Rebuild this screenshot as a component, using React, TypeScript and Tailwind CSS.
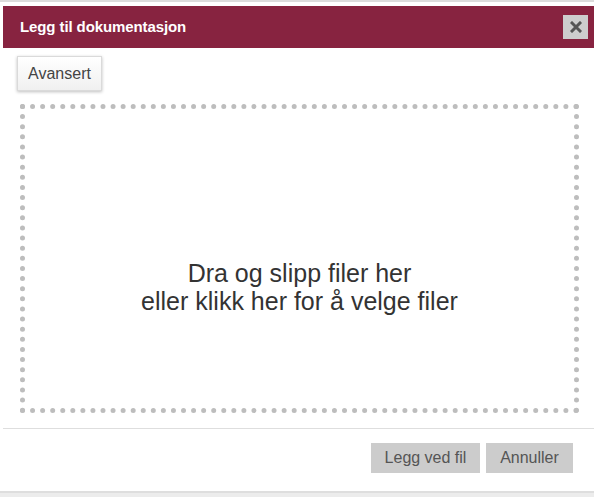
import React from 'react';

export default function App() {
  return (
    <div className="w-[594px] h-[497px] bg-white overflow-hidden font-['Liberation_Sans',Arial,sans-serif] flex flex-col">
      {/* Dialog */}
      <div className="border-t-2 border-[#dcdcdc] pt-[4px] pl-[3px] flex flex-col">
        {/* Title bar */}
        <div className="h-[42px] bg-[#872340] flex items-center justify-between pl-[17px] pr-[6px]">
          <span className="text-white font-bold text-[15px] tracking-[-0.1px]">Legg til dokumentasjon</span>
          <button
            type="button"
            aria-label="Lukk"
            className="w-[25px] h-[24px] bg-[#cdcdcd] flex items-center justify-center"
          >
            <svg width="12" height="12" viewBox="0 0 12 12">
              <path d="M2 2 L10 10 M10 2 L2 10" stroke="#555" strokeWidth="3" strokeLinecap="square" />
            </svg>
          </button>
        </div>

        {/* Content */}
        <div className="pl-[14px] pt-[8px]">
          <button
            type="button"
            className="h-[35px] w-[85px] bg-gradient-to-b from-white to-[#f0f0f0] border border-[#dadada] shadow-[0_1px_3px_rgba(0,0,0,0.25)] text-[#444] text-[16px]"
          >
            Avansert
          </button>
        </div>
        <div className="pl-[17px] pr-[15px] pt-[13px] pb-[15px]">
          <div className="h-[309px] border-[5px] border-dotted border-[#bdbdbd] flex flex-col items-center justify-center text-[#333] text-[25px] leading-[28px] text-center pt-[57px]">
            <span>Dra og slipp filer her</span>
            <span>eller klikk her for å velge filer</span>
          </div>
        </div>

        {/* Button pane */}
        <div className="border-t border-[#dedede] flex justify-end gap-[6px] pt-[14px] pb-[18px] pr-[21px]">
          <button type="button" className="h-[30px] w-[109px] bg-[#cccccc] text-[#555] text-[16px]">
            Legg ved fil
          </button>
          <button type="button" className="h-[30px] w-[87px] bg-[#cccccc] text-[#555] text-[16px]">
            Annuller
          </button>
        </div>
      </div>
      <div className="flex-1 bg-[#ececec] border-t-2 border-[#dedede]" />
    </div>
  );
}
